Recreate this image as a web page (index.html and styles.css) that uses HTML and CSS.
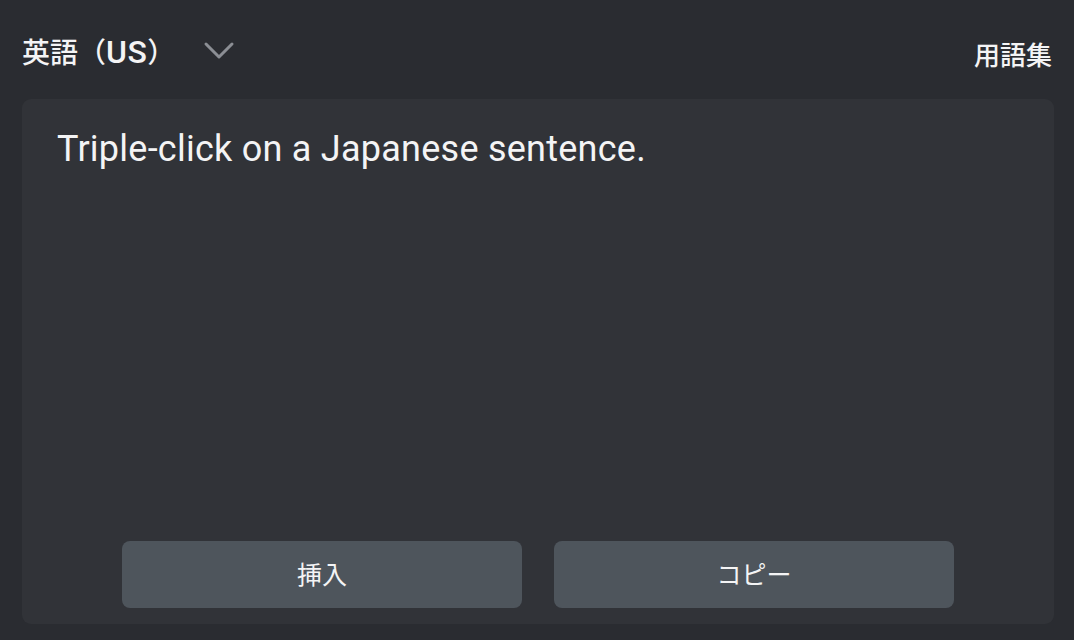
FILE: index.html
```html
<!DOCTYPE html>
<html lang="ja">
<head>
<meta charset="utf-8">
<link rel="stylesheet" href="styles.css">
</head>
<body>
<div class="app">
  <header class="top">
    <div class="lang">
      <span class="lang-name">英語（<span class="latin">US</span>）</span>
      <svg class="chev" width="32" height="20" viewBox="0 0 32 20"><path d="M3 3 L16 16 L29 3" fill="none" stroke="#8b8e94" stroke-width="3" stroke-linecap="round" stroke-linejoin="round"/></svg>
    </div>
    <span class="glossary">用語集</span>
  </header>
  <main class="panel">
    <p class="text">Triple-click on a Japanese sentence.</p>
    <div class="actions">
      <button class="btn">挿入</button>
      <button class="btn">コピー</button>
    </div>
  </main>
</div>
</body>
</html>
```
FILE: styles.css
```css
html, body {
  margin: 0;
  padding: 0;
  background: #2a2c31;
}
body {
  width: 1074px;
  height: 640px;
  overflow: hidden;
  font-family: Roboto, "Noto Sans CJK JP", sans-serif;
  color: #f4f4f5;
}
.app {
  display: flex;
  flex-direction: column;
  height: 640px;
  padding: 0 20px 16px 22px;
  box-sizing: border-box;
}
.top {
  height: 99px;
  display: flex;
  align-items: center;
  justify-content: space-between;
  flex-shrink: 0;
}
.lang {
  display: flex;
  align-items: center;
  margin-top: 2px;
}
.lang-name {
  font-size: 28px;
  font-family: "Noto Sans CJK JP", sans-serif;
  font-weight: 500;
}
.latin {
  font-family: Roboto, sans-serif;
  font-size: 32px;
  font-weight: 500;
  letter-spacing: 0.5px;
}
.chev {
  margin-left: 28px;
  margin-top: 0;
}
.glossary {
  font-size: 26px;
  font-family: "Noto Sans CJK JP", sans-serif;
  font-weight: 500;
  margin-top: 7px;
  margin-right: 2px;
}
.panel {
  flex: 1;
  background: #313338;
  border-radius: 9px;
  display: flex;
  flex-direction: column;
  padding: 0 100px 16px 100px;
}
.text {
  margin: 26px 0 0 -65px;
  font-size: 36px;
  line-height: 48px;
  letter-spacing: 0.25px;
  flex: 1;
}
.actions {
  display: flex;
  gap: 32px;
  margin-top: -3px;
}
.btn {
  width: 400px;
  height: 67px;
  border: none;
  border-radius: 8px;
  background: #4e555c;
  color: #f4f4f5;
  font-family: "Noto Sans CJK JP", sans-serif;
  font-size: 25px;
  padding: 0 0 3px 0;
}
```
